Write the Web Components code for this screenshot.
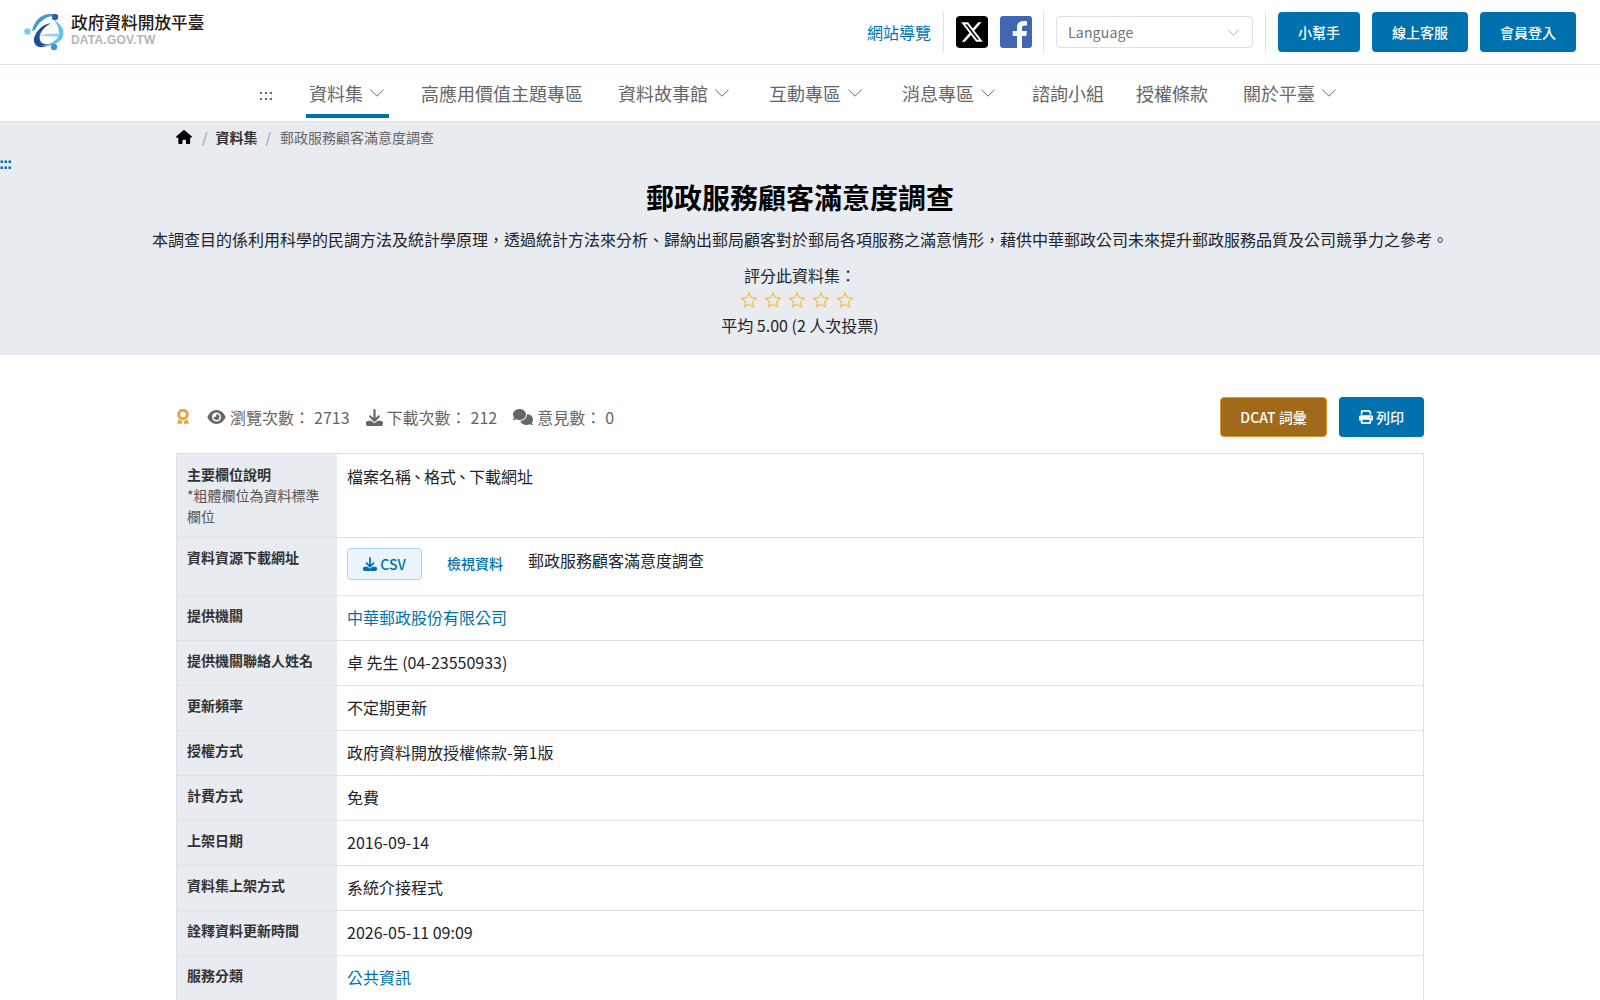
<!DOCTYPE html>
<html lang="zh-Hant">
<head>
<meta charset="utf-8">
<title>郵政服務顧客滿意度調查</title>
<style>
    html,body{margin:0;padding:0;background:#fff}
    body{
        font-family:"Noto Sans CJK TC","Noto Sans",sans-serif;
        font-size:16px;
        color:#212529;
        height:1000px;
        overflow:hidden;
    }
    .tight{margin:0 -1.5px}
</style>
</head>
<body>
<app-header></app-header>
<app-nav></app-nav>
<dataset-hero></dataset-hero>
<dataset-stats></dataset-stats>
<info-table>
    <info-row label="主要欄位說明" note="*粗體欄位為資料標準欄位" pad="10" bottom="13">檔案名稱<span class="tight">、</span>格式<span class="tight">、</span>下載網址</info-row>
    <info-row label="資料資源下載網址" pad="10" bottom="15"><resource-link>郵政服務顧客滿意度調查</resource-link></info-row>
    <info-row label="提供機關"><a href="#">中華郵政股份有限公司</a></info-row>
    <info-row label="提供機關聯絡人姓名">卓 先生 (04-23550933)</info-row>
    <info-row label="更新頻率">不定期更新</info-row>
    <info-row label="授權方式">政府資料開放授權條款-第1版</info-row>
    <info-row label="計費方式">免費</info-row>
    <info-row label="上架日期">2016-09-14</info-row>
    <info-row label="資料集上架方式">系統介接程式</info-row>
    <info-row label="詮釋資料更新時間">2026-05-11 09:09</info-row>
    <info-row label="服務分類" bottom="24"><a href="#">公共資訊</a></info-row>
</info-table>

<script>
const ICONS = {
    download:`<svg viewBox="0 0 512 512" fill="currentColor"><path d="M288 32c0-17.700-14.300-32-32-32s-32 14.300-32 32v242.700l-73.400-73.400c-12.500-12.500-32.800-12.500-45.300 0s-12.500 32.800 0 45.300l128 128c12.500 12.500 32.800 12.500 45.300 0l128-128c12.500-12.500 12.500-32.800 0-45.300s-32.800-12.500-45.300 0L288 274.700V32zM64 352c-35.300 0-64 28.700-64 64v32c0 35.300 28.700 64 64 64h384c35.300 0 64-28.700 64-64v-32c0-35.300-28.700-64-64-64H346.500l-45.300 45.300c-25 25-65.500 25-90.500 0L165.500 352H64z"/></svg>`,
    chevron:`<svg viewBox="0 0 16 16" fill="none" stroke="currentColor" stroke-width="1"><path d="M1.500 4.800 8 11.200l6.500-6.400"/></svg>`
};

class AppHeader extends HTMLElement{
    constructor(){
        super();
        this.attachShadow({mode:"open"});
    }
    connectedCallback(){
        this.shadowRoot.innerHTML = /* html */`
            <style>
                :host{display:flex;align-items:center;height:64px;border-bottom:1px solid #dee2e9;padding:0 24px;}
                .logo{display:flex;align-items:center;gap:5px;color:#231815;text-decoration:none}
                .logo svg{width:42px;height:40px;display:block}
                .logo__name{display:block;font-size:16.700px;line-height:20px;font-weight:500;white-space:nowrap;margin-top:-5px}
                .logo__en{display:block;font:bold 12px/13px "Liberation Sans",sans-serif;color:#b5b5b6;letter-spacing:.2px;margin-top:2px}
                .tools{margin-left:auto;display:flex;align-items:center;height:40px}
                .sitemap{color:#0071ad;text-decoration:none;white-space:nowrap;margin-right:12px}
                .sep{width:1px;height:40px;background:#dee2e6}
                .social{display:block;width:32px;height:32px;margin-left:12px}
                .social + .social{margin-right:11px}
                .lang{box-sizing:border-box;width:197px;height:32px;margin:0 12px;border:1px solid #dee2e6;border-radius:4px;display:flex;align-items:center;justify-content:space-between;padding:0 12px 0 11px;color:#6c757d;font-size:14px;letter-spacing:.2px}
                .lang svg{width:13px;height:13px;color:#8f98a3}
                .btn{box-sizing:border-box;height:40px;display:flex;align-items:center;justify-content:center;background:#0071ad;color:#fff;border-radius:4px;font-size:14px;font-weight:500;text-decoration:none}
                .btn + .btn{margin-left:12px}
                .btn--first{margin-left:12px}
            </style>
            <a class="logo" href="#">
                <svg viewBox="0 0 42 40">
                    <path d="M8 19C10 9 17 2 26 2c3 0 5 1 6 2-9-1-17 5-21 14z" fill="#3a9bd8"/>
                    <path d="M27 11c-8 1-15 8-17 15-1 6 3 10 9 9 3-.5 6-1.500 8-3-5 1-10 0-11-4-2-6 4-13 11-17z" fill="#1b4f9c"/>
                    <path d="M30 8c7 4 11 10 9 16-2 7-12 11-23 10 9-1 18-5 19-12 .5-5-2-10-5-14z" fill="#62c3ea"/>
                    <path d="M14 24c6-2 15-3 21-2l-1 3c-6-1-13-1-20-1z" fill="#62c3ea" opacity=".7"/>
                    <circle cx="31" cy="5" r="3.200" fill="#2b62ad"/>
                    <circle cx="3.500" cy="19.500" r="3.200" fill="#7ccbee"/>
                    <circle cx="30" cy="35" r="3.200" fill="#3d95d8"/>
                </svg>
                <span>
                    <span class="logo__name">政府資料開放平臺</span>
                    <span class="logo__en">DATA.GOV.TW</span>
                </span>
            </a>
            <div class="tools">
                <a class="sitemap" href="#">網站導覽</a>
                <span class="sep"></span>
                <svg class="social" viewBox="0 0 32 32"><rect width="32" height="32" rx="4" fill="#000"/><g transform="translate(4 4)"><path fill="#fff" d="M18.244 2.250h3.308l-7.227 8.260 8.502 11.240H16.170l-5.214-6.817L4.990 21.750H1.680l7.730-8.835L1.254 2.250H8.080l4.713 6.231zm-1.161 17.520h1.833L7.084 4.126H5.117z"/></g></svg>
                <svg class="social" viewBox="0 0 32 32"><rect width="32" height="32" rx="3" fill="#4267b2"/><path d="M22 32V20h4.200l.7-5H22v-3c0-1.500.6-2.500 2.600-2.500H27V5.200C26.500 5.100 25 5 23.400 5 19.700 5 17 7.200 17 11.400V15h-4.300v5H17v12z" fill="#fff"/></svg>
                <span class="sep"></span>
                <div class="lang">Language ${ICONS.chevron}</div>
                <span class="sep"></span>
                <a class="btn btn--first" style="width:82px" href="#">小幫手</a>
                <a class="btn" style="width:96px" href="#">線上客服</a>
                <a class="btn" style="width:96px" href="#">會員登入</a>
            </div>
        `;
    }
}

class AppNav extends HTMLElement{
    constructor(){
        super();
        this.attachShadow({mode:"open"});
    }
    connectedCallback(){
        const items = [
            ["資料集",1,35,"active"],
            ["高應用價值主題專區",0,36],
            ["資料故事館",1,35],
            ["互動專區",1,39],
            ["消息專區",1,39],
            ["諮詢小組",0,36],
            ["授權條款",0,32],
            ["關於平臺",1,35]
        ];
        this.shadowRoot.innerHTML = /* html */`
            <style>
                :host{display:flex;height:56px;padding-left:260px;border-bottom:1px solid #dee2e6;color:#666;font-size:18px}
                .dots{width:14px;height:12px;margin-top:25px}
                .item{display:flex;align-items:center;height:56px;position:relative;white-space:nowrap;color:#666;text-decoration:none}
                .item span{display:block;line-height:56px}
                .item svg{width:16px;height:16px;margin-left:6px}
                .active::after{content:"";position:absolute;left:-3px;right:-4px;top:49px;height:4px;background:#0071ad}
            </style>
            <svg class="dots" viewBox="0 0 14 12"><g fill="#666"><rect x="0" y="2" width="2" height="2"/><rect x="5" y="2" width="2" height="2"/><rect x="10" y="2" width="2" height="2"/><rect x="0" y="8" width="2" height="2"/><rect x="5" y="8" width="2" height="2"/><rect x="10" y="8" width="2" height="2"/></g></svg>
            ${items.map(([text,drop,gap,cls])=>`
                <a class="item ${cls||""}" href="#" style="margin-left:${gap}px">
                    <span>${text}</span>${drop?ICONS.chevron:""}
                </a>`).join("")}
        `;
    }
}

class StarRating extends HTMLElement{
    constructor(){
        super();
        this.attachShadow({mode:"open"});
    }
    connectedCallback(){
        const star = `<svg viewBox="0 0 24 24" fill="none" stroke="#f5b92f" stroke-width="1.400"><path d="M12 2.500l2.900 6.300 6.800.8-5 4.700 1.300 6.800-6-3.400-6 3.400 1.300-6.800-5-4.700 6.800-.8z"/></svg>`;
        this.shadowRoot.innerHTML = /* html */`
            <style>
                :host{display:flex;justify-content:center;gap:6px;height:24px;align-items:center;padding-right:6px;margin-top:1px}
                svg{width:18px;height:18px;display:block}
            </style>
            ${star.repeat(5)}
        `;
    }
}

class DatasetHero extends HTMLElement{
    constructor(){
        super();
        this.attachShadow({mode:"open"});
    }
    connectedCallback(){
        this.shadowRoot.innerHTML = /* html */`
            <style>
                :host{display:block;background:#e8ebf0;height:233px;position:relative;text-align:center;color:#212529}
                .crumbs{display:flex;align-items:center;height:30px;padding-left:176px;font-size:14px;color:#666}
                .crumbs svg{width:16px;height:14px;display:block;color:#000}
                .crumbs b{color:#333;font-weight:700}
                .crumbs i{font-style:normal;color:#999;margin:0 8px}
                .skip{position:absolute;left:0;top:38px;width:12px;height:10px}
                h1{margin:25px 0 0;font-size:28px;line-height:40px;font-weight:700;color:#000}
                p{margin:0}
                .desc{margin-top:10px;line-height:24px;white-space:nowrap}
                .rate{margin-top:12px;line-height:24px}
                .avg{line-height:24px;margin-top:1px}
            </style>
            <nav class="crumbs">
                <svg viewBox="0 0 576 512" fill="currentColor"><path d="M575.800 255.500c0 18-15 32.100-32 32.100h-32l.7 160.200c0 2.700-.2 5.400-.5 8.100V472c0 22.100-17.900 40-40 40h-72c-22.100 0-40-17.900-40-40v-88c0-17.700-14.300-32-32-32h-64c-17.700 0-32 14.300-32 32v88c0 22.100-17.900 40-40 40h-71.700c-22.200 0-40.100-17.900-40.100-40V287.600H32c-18 0-32-14-32-32.100 0-9 3-17 10-24L266.400 8c7-7 15-8 22-8s15 2 21 7l255.400 224.500c8 7 12 15 11 24z"/></svg>
                <i style="margin-left:10px">/</i><b>資料集</b><i style="margin-right:9px">/</i><span>郵政服務顧客滿意度調查</span>
            </nav>
            <svg class="skip" viewBox="0 0 12 10"><g fill="#0071ad"><rect x="0.500" y="0.500" width="2.500" height="2.500"/><rect x="4.500" y="0.500" width="2.500" height="2.500"/><rect x="8.500" y="0.500" width="2.500" height="2.500"/><rect x="0.500" y="6.500" width="2.500" height="2.500"/><rect x="4.500" y="6.500" width="2.500" height="2.500"/><rect x="8.500" y="6.500" width="2.500" height="2.500"/></g></svg>
            <h1>郵政服務顧客滿意度調查</h1>
            <p class="desc">本調查目的係利用科學的民調方法及統計學原理，透過統計方法來分析、歸納出郵局顧客對於郵局各項服務之滿意情形，藉供中華郵政公司未來提升郵政服務品質及公司競爭力之參考。</p>
            <p class="rate">評分此資料集：</p>
            <star-rating></star-rating>
            <p class="avg">平均 5.00 (2 人次投票)</p>
        `;
    }
}

class DatasetStats extends HTMLElement{
    constructor(){
        super();
        this.attachShadow({mode:"open"});
    }
    connectedCallback(){
        this.shadowRoot.innerHTML = /* html */`
            <style>
                :host{display:flex;align-items:center;box-sizing:border-box;height:98px;padding:42px 176px 16px;color:#666;font-size:16px;white-space:nowrap}
                svg{display:block;flex:none}
                .stat{display:flex;align-items:center;gap:4px}
                .btns{margin-left:auto;display:flex;gap:12px}
                .btn{box-sizing:border-box;height:40px;display:flex;align-items:center;justify-content:center;gap:3px;border-radius:4px;color:#fff;font-size:14px;font-weight:500;text-decoration:none}
                .btn svg{width:14px;height:14px}
                .dcat{width:107px;background:#a1691a;border:1px solid #e0952a}
                .print{width:85px;background:#0071ad}
            </style>
            <svg width="14" height="16" viewBox="0 0 14 16"><circle cx="7" cy="5.500" r="4.300" fill="none" stroke="#e8a33d" stroke-width="3"/><path d="M2.500 10.500 1 15l3-.5 1.500 1 .8-3.500zM11.500 10.500 13 15l-3-.5-1.500 1-.8-3.500z" fill="#e8a33d"/></svg>
            <div class="stat" style="margin-left:17px">
                <svg width="19" height="16" viewBox="0 0 576 512" fill="#666"><path d="M288 32c-80.800 0-145.500 36.800-192.600 80.600C48.600 156 17.300 208 2.500 243.700c-3.300 7.900-3.300 16.700 0 24.600C17.300 304 48.600 356 95.400 399.400 142.500 443.200 207.200 480 288 480s145.500-36.800 192.600-80.600c46.800-43.500 78.100-95.400 93-131.100 3.300-7.900 3.300-16.700 0-24.600-14.900-35.700-46.200-87.700-93-131.100C433.500 68.800 368.800 32 288 32zM144 256a144 144 0 1 1 288 0 144 144 0 1 1-288 0zm144-64c0 35.300-28.700 64-64 64-7.100 0-13.900-1.200-20.300-3.300-5.500-1.800-11.900 1.600-11.700 7.400.3 6.900 1.300 13.800 3.200 20.700 13.700 51.200 66.400 81.600 117.600 67.900s81.600-66.400 67.900-117.600c-11.100-41.500-47.800-69.400-88.600-71.100-5.800-.2-9.200 6.100-7.400 11.700 2.100 6.400 3.300 13.200 3.300 20.300z"/></svg>
                <span>瀏覽次數：</span><span>2713</span>
            </div>
            <div class="stat" style="margin-left:16px">
                <span style="display:block;width:17px;height:17px;color:#666">${ICONS.download}</span>
                <span>下載次數：</span><span>212</span>
            </div>
            <div class="stat" style="margin-left:16px">
                <svg width="20" height="16" viewBox="0 0 640 512" fill="#666"><path d="M208 352c114.900 0 208-78.800 208-176S322.900 0 208 0 0 78.800 0 176c0 38.600 14.700 74.300 39.600 103.400-3.500 9.400-8.700 17.700-14.200 24.700-4.800 6.200-9.700 11-13.300 14.300-1.800 1.600-3.300 2.900-4.300 3.700-.5.400-.9.700-1.100.8l-.2.200C1 327.200-1.400 334.400.8 340.900S9.100 352 16 352c21.800 0 43.800-5.600 62.100-12.500 9.200-3.500 17.800-7.400 25.200-11.400C134.100 343.300 169.800 352 208 352zm240-176c0 112.300-99.100 196.900-216.500 207 24.300 74.400 104.900 129 200.500 129 38.200 0 73.900-8.700 104.700-23.900 7.500 4 16 7.900 25.200 11.400 18.300 6.900 40.300 12.500 62.100 12.500 6.900 0 13.100-4.500 15.200-11.100 2.100-6.600-.2-13.800-5.800-17.900l-.2-.2c-.2-.2-.6-.4-1.100-.8-1-.8-2.500-2-4.300-3.700-3.600-3.300-8.500-8.100-13.300-14.300-5.500-7-10.700-15.400-14.200-24.700 24.900-29 39.600-64.700 39.600-103.400 0-92.800-84.900-168.900-192.600-175.500.4 5.100.6 10.300.6 15.500z"/></svg>
                <span>意見數：</span><span>0</span>
            </div>
            <div class="btns">
                <a class="btn dcat" href="#">DCAT 詞彙</a>
                <a class="btn print" href="#"><svg viewBox="0 0 512 512" fill="#fff"><path d="M128 0C92.700 0 64 28.700 64 64v96h64V64h226.700L384 93.300V160h64V93.300c0-17-6.700-33.300-18.700-45.300L400 18.700C388 6.700 371.700 0 354.700 0H128zm256 352v96H128v-96h256zm64 32h32c17.700 0 32-14.300 32-32v-96c0-35.300-28.700-64-64-64H64c-35.300 0-64 28.700-64 64v96c0 17.700 14.300 32 32 32h32v64c0 35.300 28.700 64 64 64h256c35.300 0 64-28.700 64-64v-64zm-16-136a24 24 0 1 1 0 48 24 24 0 1 1 0-48z"/></svg>列印</a>
            </div>
        `;
    }
}

class InfoTable extends HTMLElement{
    constructor(){
        super();
        this.attachShadow({mode:"open"});
    }
    connectedCallback(){
        this.shadowRoot.innerHTML = /* html */`
            <style>
                :host{display:block;margin:0 176px;border:1px solid #dee2e6;border-bottom:0}
            </style>
            <slot></slot>
        `;
    }
}

class InfoRow extends HTMLElement{
    constructor(){
        super();
        this.attachShadow({mode:"open"});
    }
    connectedCallback(){
        const note = this.getAttribute("note");
        const pad = this.getAttribute("pad") || "9";
        const bottom = this.getAttribute("bottom") || "11";
        this.shadowRoot.innerHTML = /* html */`
            <style>
                :host{display:grid;grid-template-columns:160px 1fr;border-bottom:1px solid #dee2e6;min-height:44px}
                .label{background:#e8ebf0;padding:${note?10:9}px 10px 10px;font-size:14px;line-height:21px;color:#333}
                .label b{display:block;font-weight:700}
                .label small{display:block;font-size:14px;color:#555}
                .value{padding:${pad}px 10px ${bottom}px;line-height:24px;color:#212529}
                ::slotted(a){color:#0071ad;text-decoration:none}
            </style>
            <div class="label"><b>${this.getAttribute("label")}</b>${note?`<small>${note}</small>`:""}</div>
            <div class="value"><slot></slot></div>
        `;
    }
}

class ResourceLink extends HTMLElement{
    constructor(){
        super();
        this.attachShadow({mode:"open"});
    }
    connectedCallback(){
        this.shadowRoot.innerHTML = /* html */`
            <style>
                :host{display:flex;align-items:flex-start;white-space:nowrap}
                a{text-decoration:none;color:#0071ad;font-size:14px;font-weight:500}
                .csv{box-sizing:border-box;width:75px;height:32px;display:flex;align-items:center;justify-content:center;gap:3px;background:#ebf4ff;border:1px solid #a8d2f0;border-radius:4px}
                .csv span{display:block;width:14px;height:14px;line-height:0}
                .view{margin-left:25px;line-height:30px}
                .name{margin-left:25px;line-height:24px}
            </style>
            <a class="csv" href="#"><span>${ICONS.download}</span>CSV</a>
            <a class="view" href="#">檢視資料</a>
            <span class="name"><slot></slot></span>
        `;
    }
}

customElements.define("app-header",AppHeader);
customElements.define("app-nav",AppNav);
customElements.define("star-rating",StarRating);
customElements.define("dataset-hero",DatasetHero);
customElements.define("dataset-stats",DatasetStats);
customElements.define("info-table",InfoTable);
customElements.define("info-row",InfoRow);
customElements.define("resource-link",ResourceLink);
</script>
</body>
</html>
